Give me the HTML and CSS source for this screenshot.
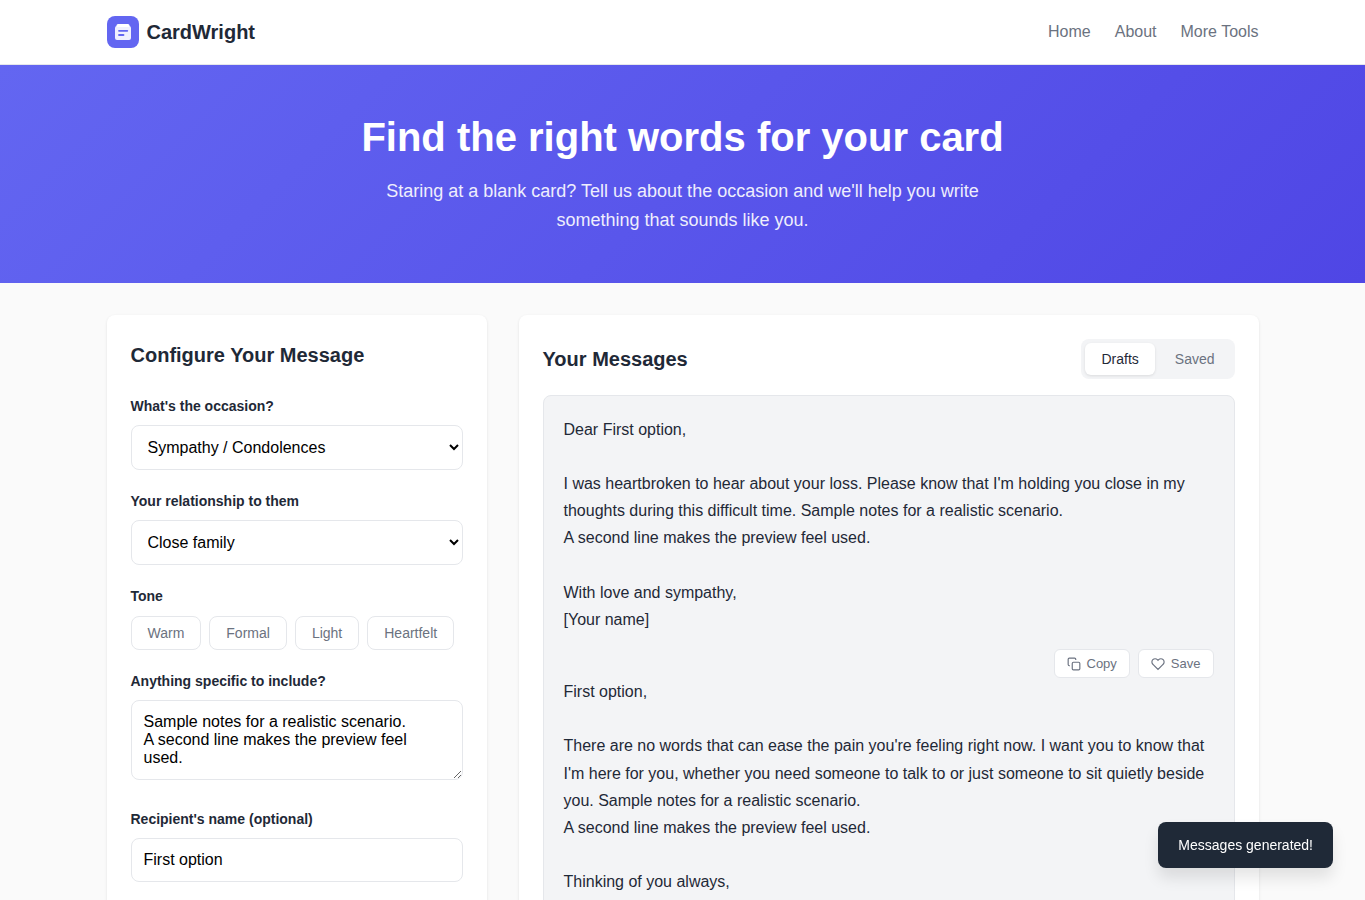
FILE: index.html
```html
<!DOCTYPE html>
<html lang="en">
<head>
    <meta charset="UTF-8">
    <meta name="viewport" content="width=device-width, initial-scale=1.0">
    <title>CardWright</title>
    <link rel="stylesheet" href="styles.css">
</head>
<body>
    <header class="header">
        <div class="container header-inner">
            <a href="#" class="logo">
                <svg width="32" height="32" viewBox="0 0 32 32" fill="none" aria-hidden="true">
                    <rect width="32" height="32" rx="8" fill="#6366f1"/>
                    <rect x="8" y="10" width="16" height="14" rx="2" fill="#fff" fill-opacity="0.9"/>
                    <path d="M9.5 11V9.5A1.5 1.5 0 0 1 11 8h10a1.5 1.5 0 0 1 1.5 1.5V11z" fill="#fff"/>
                    <path d="M12 14.8h8.3M12 19h4.5" stroke="#6366f1" stroke-width="1.8" stroke-linecap="round"/>
                </svg>
                <span>CardWright</span>
            </a>
            <nav class="nav">
                <a href="#">Home</a>
                <a href="#">About</a>
                <a href="#">More Tools</a>
            </nav>
        </div>
    </header>

    <section class="hero">
        <h1>Find the right words for your card</h1>
        <p>Staring at a blank card? Tell us about the occasion and we'll help you write something that sounds like you.</p>
    </section>

    <main class="container main-grid">
        <!-- Message settings -->
        <form class="panel">
            <h2>Configure Your Message</h2>

            <div class="form-group">
                <label for="occasion">What's the occasion?</label>
                <select id="occasion" class="field">
                    <option>Sympathy / Condolences</option>
                </select>
            </div>

            <div class="form-group">
                <label for="relationship">Your relationship to them</label>
                <select id="relationship" class="field">
                    <option>Close family</option>
                </select>
            </div>

            <div class="form-group" role="group" aria-labelledby="toneLabel">
                <span class="group-label" id="toneLabel">Tone</span>
                <div class="tones">
                    <button type="button" class="tone-btn">Warm</button>
                    <button type="button" class="tone-btn">Formal</button>
                    <button type="button" class="tone-btn">Light</button>
                    <button type="button" class="tone-btn">Heartfelt</button>
                </div>
            </div>

            <div class="form-group">
                <label for="notes">Anything specific to include?</label>
                <textarea id="notes" class="field">Sample notes for a realistic scenario.
A second line makes the preview feel used.</textarea>
            </div>

            <div class="form-group">
                <label for="recipient">Recipient's name (optional)</label>
                <input type="text" id="recipient" class="field" value="First option">
            </div>

            <button type="button" class="generate-btn">Generate Messages</button>
        </form>

        <!-- Generated messages -->
        <section class="panel">
            <div class="panel-header">
                <h2>Your Messages</h2>
                <div class="tabs">
                    <button type="button" class="tab active">Drafts</button>
                    <button type="button" class="tab">Saved</button>
                </div>
            </div>

            <div class="messages">
                <article>
                    <div class="message-text">Dear First option,

I was heartbroken to hear about your loss. Please know that I'm holding you close in my thoughts during this difficult time. Sample notes for a realistic scenario.
A second line makes the preview feel used.

With love and sympathy,
[Your name]</div>
                    <div class="message-actions">
                        <button type="button" class="action-btn">
                            <svg width="14" height="14" viewBox="0 0 24 24" fill="none" stroke="currentColor" stroke-width="2" aria-hidden="true">
                                <rect x="9" y="9" width="13" height="13" rx="2"/>
                                <path d="M5 15H4a2 2 0 0 1-2-2V4a2 2 0 0 1 2-2h9a2 2 0 0 1 2 2v1"/>
                            </svg>
                            Copy
                        </button>
                        <button type="button" class="action-btn">
                            <svg width="14" height="14" viewBox="0 0 24 24" fill="none" stroke="currentColor" stroke-width="2" aria-hidden="true">
                                <path d="M20.84 4.61a5.5 5.5 0 0 0-7.78 0L12 5.67l-1.06-1.06a5.5 5.5 0 0 0-7.78 7.78l1.06 1.06L12 21.23l7.78-7.78 1.06-1.06a5.5 5.5 0 0 0 0-7.78z"/>
                            </svg>
                            Save
                        </button>
                    </div>
                </article>

                <article>
                    <div class="message-text">First option,

There are no words that can ease the pain you're feeling right now. I want you to know that I'm here for you, whether you need someone to talk to or just someone to sit quietly beside you. Sample notes for a realistic scenario.
A second line makes the preview feel used.

Thinking of you always,
[Your name]</div>
                </article>
            </div>
        </section>
    </main>

    <div class="toast" role="status">Messages generated!</div>
</body>
</html>
```
FILE: styles.css
```css
* {
    box-sizing: border-box;
    margin: 0;
    padding: 0;
}

body {
    font-family: "Liberation Sans", Arial, sans-serif;
    font-size: 16px;
    line-height: 1.6;
    color: #1f2937;
    background: #fafafa;
}

button,
select,
input,
textarea {
    font-family: inherit;
}

button {
    cursor: pointer;
}

.container {
    max-width: 1200px;
    margin: 0 auto;
    padding: 0 24px;
}

/* Header */
.header {
    background: #fff;
    border-bottom: 1px solid #e5e7eb;
}

.header-inner {
    display: flex;
    justify-content: space-between;
    align-items: center;
    padding-top: 16px;
    padding-bottom: 16px;
}

.logo {
    display: flex;
    align-items: center;
    gap: 8px;
    font-size: 20px;
    font-weight: 700;
    color: #1f2937;
    text-decoration: none;
}

.nav {
    display: flex;
    gap: 24px;
}

.nav a {
    color: #6b7280;
    text-decoration: none;
}

/* Hero */
.hero {
    padding: 48px 24px;
    text-align: center;
    color: #fff;
    background: linear-gradient(135deg, #6366f1 0%, #4f46e5 100%);
}

.hero h1 {
    margin-bottom: 16px;
    font-size: 40px;
    line-height: 1.2;
}

.hero p {
    max-width: 600px;
    margin: 0 auto;
    font-size: 18px;
    opacity: 0.9;
}

/* Panels */
.main-grid {
    display: grid;
    grid-template-columns: 380px 1fr;
    gap: 32px;
    align-items: start;
    padding-top: 32px;
    padding-bottom: 32px;
}

.panel {
    padding: 24px;
    background: #fff;
    border-radius: 8px;
    box-shadow: 0 1px 3px rgba(0, 0, 0, 0.1);
}

.panel h2 {
    font-size: 20px;
}

form.panel h2 {
    margin-bottom: 24px;
}

/* Form */
.form-group {
    margin-bottom: 20px;
}

.form-group label,
.group-label {
    display: block;
    margin-bottom: 8px;
    font-size: 14px;
    font-weight: 600;
}

.field {
    width: 100%;
    padding: 12px;
    font-size: 16px;
    color: #000;
    background: #fff;
    border: 1px solid #e5e7eb;
    border-radius: 8px;
}

textarea.field {
    min-height: 80px;
    resize: vertical;
}

.tones {
    display: flex;
    flex-wrap: wrap;
    gap: 8px;
}

.tone-btn {
    padding: 8px 16px;
    font-size: 14px;
    color: #6b7280;
    background: #fff;
    border: 1px solid #e5e7eb;
    border-radius: 8px;
}

.generate-btn {
    width: 100%;
    padding: 12px;
    font-size: 16px;
    font-weight: 600;
    color: #fff;
    background: #6366f1;
    border: none;
    border-radius: 8px;
}

/* Messages */
.panel-header {
    display: flex;
    justify-content: space-between;
    align-items: center;
    margin-bottom: 16px;
}

.tabs {
    display: flex;
    gap: 4px;
    padding: 4px;
    background: #f3f4f6;
    border-radius: 8px;
}

.tab {
    padding: 8px 16px;
    font-size: 14px;
    color: #6b7280;
    background: none;
    border: none;
    border-radius: 6px;
}

.tab.active {
    color: #1f2937;
    background: #fff;
    box-shadow: 0 1px 3px rgba(0, 0, 0, 0.1);
}

.messages {
    padding: 20px;
    background: #f3f4f6;
    border: 1px solid #e5e7eb;
    border-radius: 8px;
}

.message-text {
    line-height: 1.7;
    white-space: pre-wrap;
}

.message-actions {
    display: flex;
    justify-content: flex-end;
    gap: 8px;
    margin-top: 16px;
}

.action-btn {
    display: flex;
    align-items: center;
    gap: 6px;
    padding: 6px 12px;
    font-size: 13px;
    color: #6b7280;
    background: #fff;
    border: 1px solid #e5e7eb;
    border-radius: 6px;
}

/* Toast */
.toast {
    position: fixed;
    right: 32px;
    bottom: 32px;
    padding: 12px 20px;
    font-size: 14px;
    color: #fff;
    background: #1f2937;
    border-radius: 8px;
    box-shadow: 0 10px 15px rgba(0, 0, 0, 0.1);
}
```
